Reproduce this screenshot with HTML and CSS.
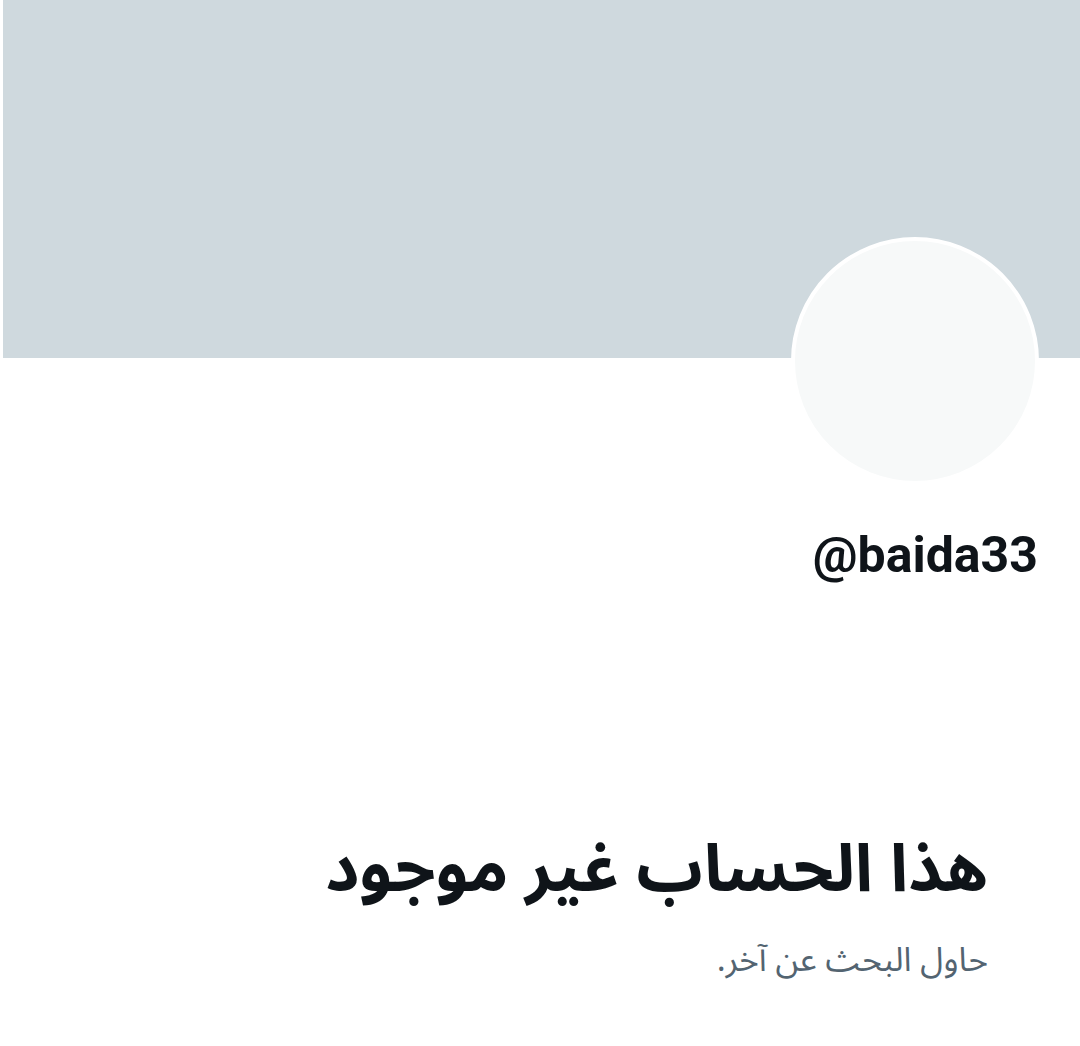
FILE: index.html
```html
<!DOCTYPE html>
<html lang="ar" dir="rtl">
<head>
  <meta charset="UTF-8">
  <meta name="viewport" content="width=device-width, initial-scale=1.0">
  <title>هذا الحساب غير موجود</title>
  <link rel="stylesheet" href="styles.css">
</head>
<body>

  <!-- الغلاف والصورة -->
  <div class="profile-header">
    <div class="banner"></div>
    <div class="avatar"></div>
  </div>

  <!-- اسم المستخدم -->
  <div class="handle-row">
    <span class="handle" dir="ltr">@baida33</span>
  </div>

  <!-- رسالة الخطأ -->
  <div class="empty-state">
    <h1>هذا الحساب غير موجود</h1>
    <p>حاول البحث عن آخر.</p>
  </div>

</body>
</html>
```

FILE: styles.css
```css
body {
  margin: 0;
  padding: 0;
  background: #ffffff;
  color: #0f1419;
  font-family: "Noto Sans Arabic", "DejaVu Sans", sans-serif;
}
.profile-header {
  position: relative;
  height: 482px;
}
.banner {
  height: 358px;
  margin-left: 3px;
  background-color: #cfd9de;
}
.avatar {
  position: absolute;
  top: 237px;
  right: 41px;
  width: 240px;
  height: 240px;
  border: 4px solid #ffffff;
  border-radius: 50%;
  background-color: #f7f9f9;
}
.handle-row {
  padding: 43px 42px 0 0;
}
.handle {
  font-family: Roboto, sans-serif;
  font-weight: 700;
  font-size: 50px;
  line-height: 60px;
  color: #0f1419;
}
.empty-state {
  padding: 243px 92px 0 0;
}
.empty-state h1 {
  margin: 0;
  font-size: 66px;
  font-weight: 700;
  line-height: 84px;
  color: #0f1419;
}
.empty-state p {
  margin: 26px 0 0;
  font-size: 33.5px;
  line-height: 46px;
  color: #536471;
}
```
